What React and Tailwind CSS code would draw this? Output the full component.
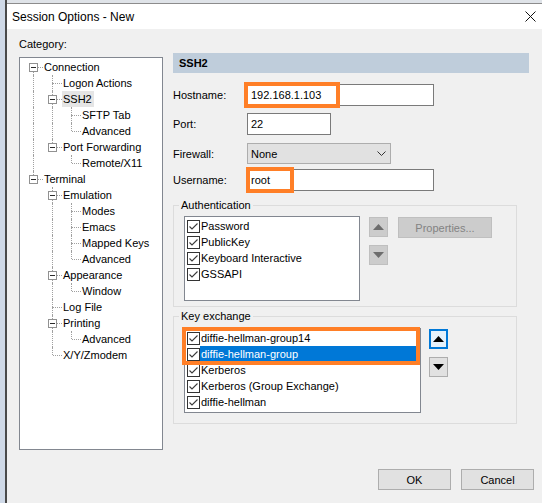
import React from 'react'

// [label, level, hasKids, isLast, rails]
const tree = [
    ['Connection', 0, true, false, []],
    ['Logon Actions', 1, false, false, [true]],
    ['SSH2', 1, true, false, [true]],
    ['SFTP Tab', 2, false, false, [true, true]],
    ['Advanced', 2, false, true, [true, true]],
    ['Port Forwarding', 1, true, true, [true]],
    ['Remote/X11', 2, false, true, [true, false]],
    ['Terminal', 0, true, true, []],
    ['Emulation', 1, true, false, [false]],
    ['Modes', 2, false, false, [false, true]],
    ['Emacs', 2, false, false, [false, true]],
    ['Mapped Keys', 2, false, false, [false, true]],
    ['Advanced', 2, false, true, [false, true]],
    ['Appearance', 1, true, false, [false]],
    ['Window', 2, false, true, [false, true]],
    ['Log File', 1, false, false, [false]],
    ['Printing', 1, true, false, [false]],
    ['Advanced', 2, false, true, [false, true]],
    ['X/Y/Zmodem', 1, false, true, [false]],
]

const authItems = ['Password', 'PublicKey', 'Keyboard Interactive', 'GSSAPI']
const kexItems = ['diffie-hellman-group14', 'diffie-hellman-group', 'Kerberos', 'Kerberos (Group Exchange)', 'diffie-hellman']

const TreeRow = ({ label, kids, last, rails, first, selected }) => (
    <div className="flex h-4 items-center">
        {rails.map((on, i) => (
            <span key={i} className="relative h-4 w-[19px] shrink-0">
                {on && <span className="absolute left-[9px] top-0 h-4 border-l border-dotted border-[#a0a0a0]" />}
            </span>
        ))}
        <span className="relative h-4 w-[19px] shrink-0">
            {!first && <span className="absolute left-[9px] top-0 h-[8px] border-l border-dotted border-[#a0a0a0]" />}
            {!last && <span className="absolute left-[9px] top-[8px] h-[8px] border-l border-dotted border-[#a0a0a0]" />}
            <span className="absolute left-[10px] top-[8px] w-[9px] border-t border-dotted border-[#a0a0a0]" />
            {kids && (
                <span className="absolute left-[5px] top-[4px] flex h-[9px] w-[9px] items-center justify-center border border-[#919191] bg-white">
                    <span className="h-px w-[5px] bg-[#2b2b2b]" />
                </span>
            )}
        </span>
        <span className={`whitespace-nowrap pl-px pr-[2px] leading-4 ${selected ? 'bg-[#e5e5e5]' : ''}`}>{label}</span>
    </div>
)

const Check = () => (
    <span className="flex h-[13px] w-[13px] shrink-0 items-center justify-center border border-[#333] bg-white">
        <svg width="11" height="11" viewBox="0 0 11 11">
            <path d="M1.5 5.5 L4 8 L9.5 2.5" fill="none" stroke="#3a3a3a" strokeWidth="1.1" />
        </svg>
    </span>
)

const ListRow = ({ label, selected }) => (
    <div className="flex h-4 items-center pl-[2px]">
        <Check />
        <span className={`flex h-4 flex-1 items-center whitespace-nowrap pl-px ${selected ? 'bg-[#0078d7] text-white' : ''}`}>{label}</span>
    </div>
)

const ArrowBtn = ({ up, variant }) => {
    const styles = {
        disabled: 'border border-[#bfbfbf] bg-[#cccccc]',
        focused: 'border-2 border-[#0078d7] bg-[#e5f1fb]',
        normal: 'border border-[#adadad] bg-[#e1e1e1]',
    }
    const fill = variant === 'disabled' ? '#6d6d6d' : '#000'
    return (
        <div className={`flex h-[20px] w-[19px] items-center justify-center ${styles[variant]}`}>
            <svg width="11" height="6" viewBox="0 0 11 6">
                <polygon points={up ? '0,6 11,6 5.5,0' : '0,0 11,0 5.5,6'} fill={fill} />
            </svg>
        </div>
    )
}

const Field = ({ label, children, className }) => (
    <div className={`flex items-center ${className}`}>
        <span className="w-[74px] shrink-0">{label}</span>
        {children}
    </div>
)

const Group = ({ title, className, children }) => (
    <fieldset className={`w-[344px] border border-[#dcdcdc] ${className}`}>
        <legend className="ml-[5px] px-[2px] leading-4">{title}</legend>
        {children}
    </fieldset>
)

export default function App() {
    return (
        <div className="flex h-[503px] w-[542px] overflow-hidden bg-[#d3dbe6] text-[11px] leading-4 text-black font-[family-name:Liberation_Sans,Arial,sans-serif]">
            <div className="w-[5px] shrink-0 bg-[#cfd9e7]" />
            <div className="flex flex-1 flex-col border-l-2 border-[#4a4a4a]">
                <div className="h-[3px] shrink-0 bg-[#dfe3e8]" />
                {/* title bar */}
                <div className="flex h-[26px] shrink-0 items-center justify-between border-t border-[#8c8c8c] bg-white pl-[5px] pr-[6px]">
                    <span className="text-[12px]">Session Options - New</span>
                    <svg width="11" height="11" viewBox="0 0 11 11">
                        <path d="M0.5 0.5 L10.5 10.5 M10.5 0.5 L0.5 10.5" stroke="#111" strokeWidth="1" />
                    </svg>
                </div>

                <div className="flex flex-1 flex-col bg-[#f0f0f0]">
                    <div className="flex gap-[10px] pl-[12px] pt-[7px]">
                        {/* category tree */}
                        <div className="flex w-[144px] shrink-0 flex-col">
                            <span>Category:</span>
                            <div className="mt-[5px] h-[393px] border border-[#828790] bg-white pl-[4px] pt-px">
                                {tree.map(([label, lv, kids, last, rails], i) => (
                                    <TreeRow key={i} label={label} kids={kids} last={last} rails={rails} first={i === 0} selected={label === 'SSH2'} />
                                ))}
                            </div>
                        </div>

                        {/* right panel */}
                        <div className="flex w-[356px] flex-col pt-[17px]">
                            <div className="flex h-[20px] items-center bg-[#bfcddb] pl-[6px] font-bold">SSH2</div>

                            <Field label="Hostname:" className="mt-[11px]">
                                <div className="relative">
                                    <div className="flex h-[22px] w-[187px] items-center border border-[#7a7a7a] bg-white pl-[3px]">192.168.1.103</div>
                                    <div className="absolute -left-[3px] -top-[2px] h-[26px] w-[96px] border-4 border-[#ff7f27]" />
                                </div>
                            </Field>
                            <Field label="Port:" className="mt-[7px]">
                                <div className="flex h-[22px] w-[84px] items-center border border-[#7a7a7a] bg-white pl-[3px]">22</div>
                            </Field>
                            <Field label="Firewall:" className="mt-[8px]">
                                <div className="flex h-[21px] w-[144px] items-center justify-between border border-[#adadad] bg-[#e1e1e1] pl-[3px] pr-[4px]">
                                    <span>None</span>
                                    <svg width="9" height="5" viewBox="0 0 9 5">
                                        <path d="M0.5 0.5 L4.5 4.5 L8.5 0.5" fill="none" stroke="#333" strokeWidth="1" />
                                    </svg>
                                </div>
                            </Field>
                            <Field label="Username:" className="mt-[5px]">
                                <div className="relative">
                                    <div className="flex h-[22px] w-[187px] items-center border border-[#7a7a7a] bg-white pl-[3px]">root</div>
                                    <div className="absolute -left-px -top-[2px] h-[26px] w-[48px] border-4 border-[#ff7f27]" />
                                </div>
                            </Field>

                            <Group title="Authentication" className="mt-[6px] pb-[5px] pt-[3px]">
                                <div className="ml-[10px] flex">
                                    <div className="h-[85px] w-[176px] border border-[#828790] bg-white pt-px">
                                        {authItems.map((a) => <ListRow key={a} label={a} />)}
                                    </div>
                                    <div className="ml-[9px] mt-px flex flex-col gap-[8px]">
                                        <ArrowBtn up variant="disabled" />
                                        <ArrowBtn variant="disabled" />
                                    </div>
                                    <div className="ml-[10px] mt-px flex h-[21px] w-[94px] items-center justify-center border border-[#bfbfbf] bg-[#cccccc] text-[#838383]">
                                        Properties...
                                    </div>
                                </div>
                            </Group>

                            <Group title="Key exchange" className="mt-px pb-[10px] pt-[4px]">
                                <div className="ml-[10px] flex">
                                    <div className="relative h-[85px] w-[237px] border border-[#828790] bg-white pt-px">
                                        {kexItems.map((k, i) => <ListRow key={k} label={k} selected={i === 1} />)}
                                        <div className="absolute -left-[3px] -top-[2px] h-[38px] w-[238px] border-4 border-[#ff7f27]" />
                                    </div>
                                    <div className="ml-[8px] mt-px flex flex-col gap-[8px]">
                                        <ArrowBtn up variant="focused" />
                                        <ArrowBtn variant="normal" />
                                    </div>
                                </div>
                            </Group>
                        </div>
                    </div>

                    <div className="mt-[19px] flex justify-end gap-[10px] pr-[8px]">
                        <button className="h-[21px] w-[73px] border border-[#adadad] bg-[#e1e1e1]">OK</button>
                        <button className="h-[21px] w-[73px] border border-[#adadad] bg-[#e1e1e1]">Cancel</button>
                    </div>
                </div>
            </div>
        </div>
    )
}
